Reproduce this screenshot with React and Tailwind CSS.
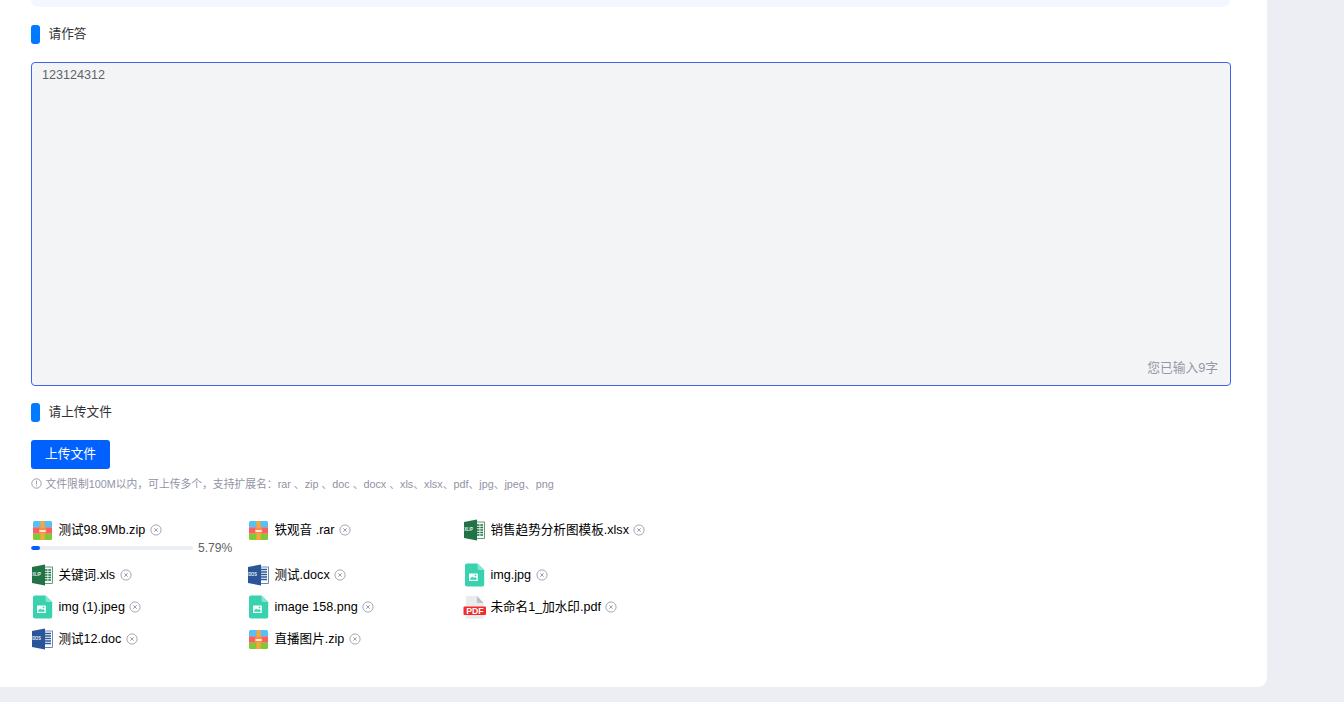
import React from "react";

function ZipIcon() {
  return (
    <svg viewBox="-0.5 0 22 24" className="h-6 w-[22px] shrink-0">
      <path d="M3 3h16a1.500 1.500 0 0 1 1.500 1.500V9.500h-19V4.500A1.500 1.500 0 0 1 3 3z" fill="#53c2f5" />
      <rect x="1.500" y="9.300" width="19" height="6.500" fill="#fc5f62" />
      <path d="M1.500 15.800h19V20.500a1.500 1.500 0 0 1-1.500 1.500H3a1.500 1.500 0 0 1-1.500-1.500z" fill="#80c936" />
      <rect x="9" y="3" width="4.200" height="19" fill="#fba63c" />
      <rect x="7.500" y="9.800" width="7.200" height="5.400" rx="1" fill="#f98b4c" />
      <rect x="8" y="12" width="6.200" height="2" fill="#fff0cf" />
    </svg>
  );
}

function OfficeIcon({ color, page, label }) {
  return (
    <svg viewBox="0 0 22 24" className="h-6 w-[22px] shrink-0">
      <rect x="12" y="4" width="9.500" height="16.500" fill={page} stroke={color} strokeWidth="0.700" />
      {label === "XLIP" ? (
        <path d="M14 7h2.500M17.300 7h2.700M14 9.500h2.500M17.300 9.500h2.700M14 12h2.500M17.300 12h2.700M14 14.500h2.500M17.300 14.500h2.700M14 17h2.500M17.300 17h2.700" stroke={color} strokeWidth="1.400" />
      ) : (
        <path d="M13 6.500h7M13 9h7M13 11.500h7M13 14h7M13 16.500h7" stroke={color} strokeWidth="1.300" />
      )}
      <path d="M1 4 14 1.500v21L1 20z" fill={color} />
      <text x="1.200" y="13.300" fontSize="4.800" fontWeight="700" textLength="8.800" lengthAdjust="spacingAndGlyphs" fill="#e6eeee" fontFamily="Liberation Sans, sans-serif">
        {label}
      </text>
    </svg>
  );
}

function ImageIcon() {
  return (
    <svg viewBox="-0.5 0.5 22 24" className="h-6 w-[22px] shrink-0">
      <path d="M3.500 1H14l6.700 6.500V22a2 2 0 0 1-2 2H3.500a2 2 0 0 1-2-2V3a2 2 0 0 1 2-2z" fill="#38d3ae" />
      <path d="M14 1l6.700 6.500H16a2 2 0 0 1-2-2z" fill="#88e5cf" />
      <rect x="5.500" y="11" width="8.800" height="7.600" rx=".7" fill="#fff" />
      <path d="M6.700 17.300v-1.300l2-2 1.700 1.500 1.300-.9 1.500 1.400v1.300z" fill="#38d3ae" />
      <circle cx="12" cy="12.900" r=".8" fill="#38d3ae" />
    </svg>
  );
}

function PdfIcon() {
  return (
    <svg viewBox="0 0 24 24" className="-mr-0.5 h-6 w-6 shrink-0">
      <path d="M4.300 1H14l6.700 7v14.200a1.500 1.500 0 0 1-1.500 1.500H4.300a1.500 1.500 0 0 1-1.500-1.500v-19.700A1.500 1.500 0 0 1 4.300 1z" fill="#e9ebef" />
      <path d="M14 1l6.700 7H15.500A1.500 1.500 0 0 1 14 6.500z" fill="#bac0cc" />
      <path d="M1.500 11.500h20.500a1 1 0 0 1 1 1v6.500a1 1 0 0 1-1 1H1.500a1 1 0 0 1-1-1V12.500a1 1 0 0 1 1-1z" fill="#f42b2b" />
      <text x="3.200" y="19.200" fontSize="8.600" fontWeight="700" textLength="17.500" lengthAdjust="spacingAndGlyphs" fill="#fff" fontFamily="Liberation Sans, sans-serif">
        PDF
      </text>
    </svg>
  );
}

function RemoveIcon() {
  return (
    <svg viewBox="0 0 12 12" className="ml-[4.500px] h-3 w-3 shrink-0" fill="none" stroke="#9292a5">
      <circle cx="6" cy="6" r="5.100" strokeWidth=".8" />
      <path d="M4.300 4.300l3.400 3.400M7.700 4.300L4.300 7.700" strokeWidth=".9" />
    </svg>
  );
}

function FileIcon({ type }) {
  if (type === "zip") return <ZipIcon />;
  if (type === "xls") return <OfficeIcon color="#217346" page="#f4faf6" label="XLIP" />;
  if (type === "doc") return <OfficeIcon color="#2a5699" page="#ffffff" label="DOS" />;
  if (type === "img") return <ImageIcon />;
  return <PdfIcon />;
}

const files = [
  { type: "zip", name: "测试98.9Mb.zip", progress: 5.79 },
  { type: "zip", name: "铁观音 .rar" },
  { type: "xls", name: "销售趋势分析图模板.xlsx" },
  { type: "xls", name: "关键词.xls" },
  { type: "doc", name: "测试.docx" },
  { type: "img", name: "img.jpg" },
  { type: "img", name: "img (1).jpeg" },
  { type: "img", name: "image 158.png" },
  { type: "pdf", name: "未命名1_加水印.pdf" },
  { type: "doc", name: "测试12.doc" },
  { type: "zip", name: "直播图片.zip" },
];

function FileItem({ file }) {
  return (
    <div>
      <div className="flex h-6 items-center">
        <FileIcon type={file.type} />
        <span className="ml-[5.400px] -mt-px whitespace-nowrap text-[12.6px] leading-5 text-black">{file.name}</span>
        <RemoveIcon />
      </div>
      {file.progress !== undefined && (
        <div className="flex h-3 items-center">
          <div className="h-1 w-[162px] overflow-hidden rounded-full bg-[#ebeef5]">
            <div className="h-full rounded-full bg-[#0061ff]" style={{ width: `${file.progress}%` }} />
          </div>
          <span className="ml-[5px] text-[12.1px] leading-3 text-[#606266]">{file.progress}%</span>
        </div>
      )}
    </div>
  );
}

function SectionTitle({ children }) {
  return (
    <div className="flex h-[19px] items-center">
      <span className="h-[19px] w-[9px] rounded-[3px] bg-[#007bff]" />
      <h2 className="-mt-px ml-[8.500px] text-[12.7px] leading-[19px] text-[#303133]">{children}</h2>
    </div>
  );
}

export default function App() {
  return (
    <div className="h-[702px] overflow-hidden bg-[#edeef3] font-['Liberation_Sans','Noto_Sans_CJK_SC',sans-serif]">
      <main className="h-[687px] w-[1267px] rounded-br-[9px] bg-white pl-[31px]">
        <div className="h-[7px] w-[1199px] rounded-b-[9px] bg-[#f4f7ff]" />
        <div className="mt-[18px]">
          <SectionTitle>请作答</SectionTitle>
        </div>
        <div className="mt-[18px] flex h-[324px] w-[1200px] flex-col justify-between rounded-[4px] border border-[#3d62f5] bg-[#f3f4f6]">
          <p className="pt-[3px] pl-[10px] text-[12.6px] leading-[19px] text-[#606266]">123124312</p>
          <p className="pr-3 pb-2 text-right text-[12.75px] leading-[19px] text-[#9797a5]">您已输入9字</p>
        </div>
        <div className="mt-[17px]">
          <SectionTitle>请上传文件</SectionTitle>
        </div>
        <button className="mt-[18px] flex h-[29px] w-[79px] items-center justify-center rounded-[3px] bg-[#0061ff] text-[12.8px] leading-none text-white">
          上传文件
        </button>
        <div className="mt-[7px] flex h-4 items-center text-[10.8px] text-[#9292a5]">
          <svg viewBox="0 0 11 11" className="-mt-px h-[11px] w-[11px]" fill="none" stroke="#9292a5" strokeWidth=".9">
            <circle cx="5.500" cy="5.500" r="4.700" />
            <path d="M5.500 2.500v3.800M5.500 7.300v1" />
          </svg>
          <span className="ml-[3.500px] whitespace-pre">文件限制100M以内，可上传多个，支持扩展名：rar 、zip 、doc 、docx 、xls、xlsx、pdf、jpg、jpeg、png</span>
        </div>
        <div className="mt-[26px] grid grid-cols-[216px_216px_216px] grid-rows-[45px_32px_32px_32px]">
          {files.map((file) => (
            <FileItem key={file.name} file={file} />
          ))}
        </div>
      </main>
    </div>
  );
}
